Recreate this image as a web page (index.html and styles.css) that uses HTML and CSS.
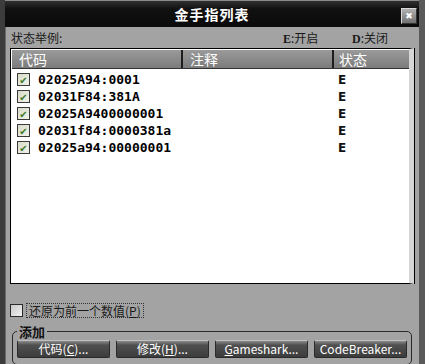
FILE: index.html
```html
<!DOCTYPE html>
<html lang="zh-CN">
  <head>
    <meta charset="UTF-8" />
    <title>金手指列表</title>
    <link rel="stylesheet" href="styles.css">
  </head>
  <body>
    <div class="window">
      <div class="titlebar">
        <span class="title">金手指列表</span>
        <span class="close">&#x2716;</span>
      </div>

      <div class="legend">
        <span class="legend-label">状态举例:</span>
        <span class="legend-on"><b>E</b>:开启</span>
        <span class="legend-off"><b>D</b>:关闭</span>
      </div>

      <div class="listbox">
        <div class="list-head">
          <div class="col col-code">代码</div>
          <div class="col col-note">注释</div>
          <div class="col col-state">状态</div>
        </div>
        <div class="list-body">
          <div class="row"><span class="check">&#10004;</span><span class="code">02025A94:0001</span><span class="state">E</span></div>
          <div class="row"><span class="check">&#10004;</span><span class="code">02031F84:381A</span><span class="state">E</span></div>
          <div class="row"><span class="check">&#10004;</span><span class="code">02025A9400000001</span><span class="state">E</span></div>
          <div class="row"><span class="check">&#10004;</span><span class="code">02031f84:0000381a</span><span class="state">E</span></div>
          <div class="row"><span class="check">&#10004;</span><span class="code">02025a94:00000001</span><span class="state">E</span></div>
        </div>
      </div>

      <div class="restore">
        <span class="box"></span>
        <span class="restore-text">还原为前一个数值(<u>P</u>)</span>
      </div>

      <fieldset class="group">
        <legend>添加</legend>
        <div class="buttons">
          <button class="btn">代码(<u>C</u>)...</button>
          <button class="btn">修改(<u>H</u>)...</button>
          <button class="btn"><u>G</u>ameshark...</button>
          <button class="btn">CodeBreaker...</button>
        </div>
      </fieldset>
    </div>
  </body>
</html>
```

FILE: styles.css
```css
body {
  margin: 0;
  padding: 0;
  background-color: #a3a3a3;
  font-family: "Noto Sans CJK SC", "DejaVu Sans", sans-serif;
  font-size: 12px;
  color: #111;
}

.window {
  width: 414px;
  height: 364px;
  border-left: 5px solid #3c3c3c;
  border-right: 6px solid #5a5a5a;
  box-shadow: inset 1px 0 0 #6a6a6a;
  background-color: #a3a3a3;
  overflow: hidden;
}

.titlebar {
  height: 27px;
  background: linear-gradient(#303030, #111111 30%, #0a0a0a);
  border-top: 1px solid #8a8a8a;
  box-sizing: border-box;
  display: flex;
  align-items: center;
  justify-content: center;
  position: relative;
}

.title {
  color: #ffffff;
  font-weight: bold;
  font-size: 14px;
  letter-spacing: 1px;
}

.close {
  position: absolute;
  right: 2px;
  top: 7px;
  width: 14px;
  height: 14px;
  background: linear-gradient(#b0b0b0, #707070);
  border: 1px solid #d8d8d8;
  border-right-color: #333;
  border-bottom-color: #333;
  color: #ffffff;
  font-size: 9px;
  line-height: 14px;
  text-align: center;
}

.legend {
  height: 21px;
  display: flex;
  align-items: center;
  padding-left: 6px;
  color: #1a1a1a;
}

.legend-label {
  width: 272px;
}

.legend-on {
  width: 69px;
}

.legend b {
  font-family: "Liberation Serif", serif;
  font-weight: bold;
}

.listbox {
  margin: 0 5px 0 5px;
  height: 236px;
  border: 1px solid #000;
  background-color: #ffffff;
  border-right: 5px solid #d6d6d6;
  box-shadow: 1px 0 0 #000;
  box-sizing: border-box;
  padding-top: 1px;
}

.list-head {
  display: flex;
  height: 18px;
  background: linear-gradient(#9a9a9a, #7c7c7c);
  border-bottom: 1px solid #333;
  margin-left: 1px;
}

.col {
  color: #ffffff;
  font-size: 14px;
  line-height: 18px;
  padding-left: 7px;
  box-sizing: border-box;
  border-right: 2px solid #1e1e1e;
}

.col-code {
  width: 171px;
}

.col-note {
  width: 151px;
}

.col-state {
  flex: 1;
  border-right: none;
  padding-left: 5px;
}

.list-body {
  padding-top: 2px;
}

.row {
  height: 17px;
  display: flex;
  align-items: center;
}

.check {
  width: 11px;
  height: 11px;
  margin-left: 6px;
  border: 1px solid #3a3a3a;
  background: linear-gradient(135deg, #d8dccb, #f0f2e6);
  color: #3d7a2c;
  font-size: 10px;
  line-height: 11px;
  text-align: center;
}

.code {
  width: 300px;
  margin-left: 8px;
  font-family: "DejaVu Sans Mono", monospace;
  font-weight: bold;
  font-size: 13px;
  color: #000;
}

.state {
  font-family: "DejaVu Sans", sans-serif;
  font-weight: bold;
  font-size: 12px;
}

.restore {
  display: flex;
  align-items: center;
  margin: 19px 0 0 5px;
  height: 14px;
}

.box {
  width: 11px;
  height: 11px;
  border: 1px solid #2a2a2a;
  background: linear-gradient(135deg, #c8c8c8, #f2f2f2);
}

.restore-text {
  margin-left: 3px;
  padding: 0 2px;
  border: 1px dotted #333;
  color: #1a1a1a;
  line-height: 13px;
}

.group {
  margin: 8px 7px 0 7px;
  padding: 2px 4px 6px 4px;
  border: 1px solid #2a2a2a;
  border-radius: 5px;
}

.group legend {
  font-weight: bold;
  padding: 0 2px;
  font-size: 13px;
  line-height: 13px;
  color: #111;
}

.buttons {
  display: flex;
  gap: 6px;
}

.btn {
  width: 93px;
  height: 18px;
  padding: 0;
  border: 1px solid #2a2a2a;
  border-top-color: #c0c0c0;
  border-radius: 2px;
  background: linear-gradient(#8a8a8a, #505050 25%, #3c3c3c);
  color: #ffffff;
  font-family: "Noto Sans CJK SC", "DejaVu Sans", sans-serif;
  font-size: 12px;
  line-height: 16px;
}
```
